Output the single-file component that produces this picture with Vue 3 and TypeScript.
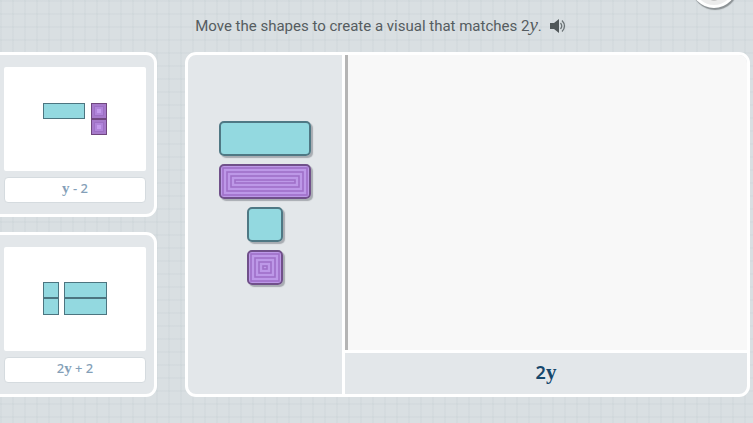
<script setup lang="ts">
interface Tile {
  x: number
  y: number
  w: number
  h: number
  negative?: boolean
}
interface Example {
  id: string
  label: string
  tiles: Tile[]
}
interface Shape {
  name: string
  w: number
  negative: boolean
  rings: number[]
}

const examples: Example[] = [
  {
    id: 'y-minus-2',
    label: 'y - 2',
    tiles: [
      { x: 39, y: 36, w: 42, h: 16 },
      { x: 87, y: 36, w: 16, h: 16, negative: true },
      { x: 87, y: 52, w: 16, h: 16, negative: true },
    ],
  },
  {
    id: '2y-plus-2',
    label: '2y + 2',
    tiles: [
      { x: 39, y: 35, w: 16, h: 16 },
      { x: 39, y: 51, w: 16, h: 17 },
      { x: 60, y: 35, w: 43, h: 16 },
      { x: 60, y: 51, w: 43, h: 17 },
    ],
  },
]

const shapes: Shape[] = [
  { name: 'Positive y', w: 92, negative: false, rings: [] },
  { name: 'Negative y', w: 92, negative: true, rings: [4, 8, 12, 16] },
  { name: 'Positive 1', w: 36, negative: false, rings: [] },
  { name: 'Negative 1', w: 36, negative: true, rings: [4, 8, 12, 16] },
]

function parts(label: string): string[] {
  return label.split(/(y)/).filter((p) => p !== '')
}
</script>

<template>
  <div class="page">
    <button class="round" type="button" aria-label="Menu"><span></span></button>
    <header class="prompt">
      <p>Move the shapes to create a visual that matches 2<i class="var">y</i>.</p>
      <button class="speaker" type="button" aria-label="Read aloud">
        <svg width="16" height="16" viewBox="0 0 16 16">
          <path d="M0 5h4l5-4v14l-5-4H0z" fill="#505759" />
          <path d="M10.500 5q2.500 3 0 6M12 2.500q5 5.500 0 11" fill="none" stroke="#6b7376" stroke-width="1.300" />
        </svg>
      </button>
    </header>

    <main class="content">
      <aside class="examples">
        <section v-for="e in examples" :key="e.id" class="card">
          <svg class="picture" width="142" height="104" viewBox="0 0 142 104">
            <g v-for="(t, i) in e.tiles" :key="i">
              <rect
                :x="t.x + 0.5" :y="t.y + 0.5" :width="t.w - 1" :height="t.h - 1"
                :fill="t.negative ? '#a67acb' : '#93d9e0'"
                :stroke="t.negative ? '#70477f' : '#4c7580'"
              />
              <template v-if="t.negative">
                <rect :x="t.x + 3.5" :y="t.y + 3.5" width="9" height="9" fill="#b084da" stroke="#9e70c5" />
                <rect :x="t.x + 6" :y="t.y + 6" width="4" height="4" fill="#c39aec" />
              </template>
            </g>
          </svg>
          <div class="caption">
            <span v-for="(p, i) in parts(e.label)" :key="i" :class="{ var: p === 'y' }">{{ p }}</span>
          </div>
        </section>
      </aside>

      <section class="board">
        <div class="palette">
          <button v-for="s in shapes" :key="s.name" class="shape" type="button" :aria-label="s.name">
            <svg :width="s.w" height="35" :viewBox="`0 0 ${s.w} 35`">
              <rect
                x="1" y="1" :width="s.w - 2" height="33" rx="4"
                :fill="s.negative ? '#bd98e8' : '#93d9e0'"
                :stroke="s.negative ? '#70508a' : '#4f7884'" stroke-width="2"
              />
              <rect
                v-for="r in s.rings" :key="r"
                :x="r" :y="r" :width="s.w - 2 * r" :height="35 - 2 * r"
                fill="none" stroke="#9f70c8" stroke-width="1.6"
              />
            </svg>
          </button>
        </div>
        <div class="work">
          <div class="canvas"></div>
          <div class="answer">2<span class="var">y</span></div>
        </div>
      </section>
    </main>
  </div>
</template>

<style>
body {
  background-color: #d9dfe2;
  background-image:
    linear-gradient(90deg, rgba(150, 170, 178, 0.07) 2px, transparent 2px),
    linear-gradient(rgba(150, 170, 178, 0.07) 2px, transparent 2px);
  background-size: 12px 13px;
}
</style>

<style scoped>
.page {
  position: relative;
  box-sizing: border-box;
  min-height: 100vh;
  overflow: hidden;
  font-family: "Noto Sans", sans-serif;
  color: #555c60;
}
button {
  padding: 0;
  border: 0;
  background: none;
  cursor: pointer;
}
svg {
  display: block;
}
.round {
  position: absolute;
  top: -38px;
  right: 16px;
  display: flex;
  align-items: flex-end;
  justify-content: center;
  width: 46px;
  height: 46px;
  border: 3px solid #fff;
  border-radius: 50%;
  background: #ececec;
  box-shadow: 1px 2px 1px #8b9194;
}
.round span {
  width: 12px;
  height: 12px;
  margin-bottom: 4px;
  border-radius: 50%;
  background: #c9c9c9;
}
.prompt {
  display: flex;
  align-items: center;
  justify-content: center;
  gap: 8px;
  height: 52px;
  padding-left: 8px;
  font-family: Roboto, "Noto Sans", sans-serif;
  font-size: 15px;
}
.prompt p {
  margin: 0;
}
.var {
  font-family: "Liberation Serif", serif;
}
.prompt .var {
  font-size: 19px;
  line-height: 16px;
}
.content {
  display: grid;
  grid-template-columns: 167px minmax(0, 1fr);
  gap: 28px;
  margin: 0 3px 26px -10px;
}
.examples {
  display: flex;
  flex-direction: column;
  gap: 15px;
}
.card {
  display: flex;
  flex-direction: column;
  align-items: flex-end;
  gap: 6px;
  padding: 12px 8px 11px;
  border: 3px solid #fff;
  border-radius: 11px;
  background: #e3e7ea;
}
.picture {
  border-radius: 2px;
  background: #fff;
}
.caption {
  box-sizing: border-box;
  width: 142px;
  height: 26px;
  border: 1px solid #d5dbdf;
  border-radius: 4px;
  background: #fff;
  color: #849fb8;
  font-size: 13px;
  font-weight: 500;
  line-height: 20px;
  text-align: center;
  white-space: pre;
}
.caption .var {
  font-size: 15px;
  font-weight: 700;
}
.board {
  display: flex;
  border: 3px solid #fff;
  border-radius: 11px;
  background: #e3e7ea;
  overflow: hidden;
}
.palette {
  display: flex;
  flex: none;
  flex-direction: column;
  align-items: center;
  gap: 8px;
  box-sizing: border-box;
  width: 157px;
  padding-top: 66px;
  border-right: 3px solid #fff;
}
.shape {
  border-radius: 5px;
  box-shadow: 2px 2px 1px rgba(80, 85, 95, 0.4);
}
.work {
  display: flex;
  flex: 1;
  flex-direction: column;
}
.canvas {
  flex: 1;
  border-left: 3px solid #b5b5b5;
  background: #f8f8f8;
}
.answer {
  height: 41px;
  border-top: 3px solid #fff;
  color: #15476c;
  font-size: 18px;
  font-weight: 600;
  line-height: 38px;
  text-align: center;
}
.answer .var {
  font-size: 21px;
  font-weight: 700;
}
</style>
